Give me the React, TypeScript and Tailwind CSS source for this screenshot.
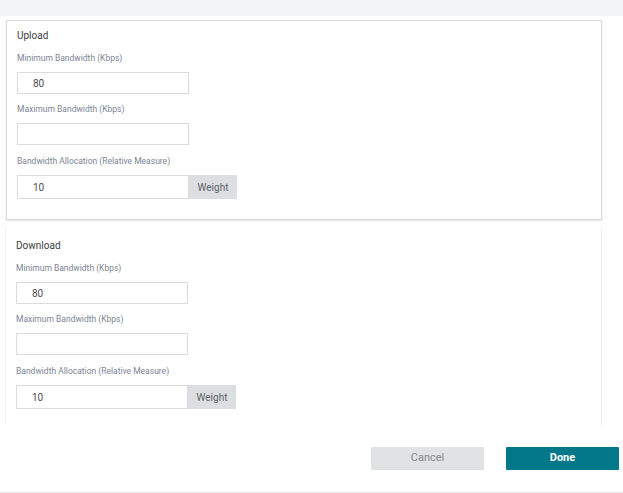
import React from 'react'

type FieldProps = {
  label: string
  value?: string
  weight?: boolean
}

const Field = ({ label, value = '', weight = false }: FieldProps) => {
  return (
    <div>
      <div className="text-[8.5px] leading-[12px] text-[#7b8594]">{label}</div>
      <div className="flex mt-[8px]">
        <input
          readOnly
          value={value}
          className={`w-[172px] ${weight ? 'h-[24px]' : 'h-[22px]'} border border-[#d9dbdf] pl-[15px] text-[10px] text-[#4a4e54] outline-none bg-white`}
        />
        {weight && (
          <div className="w-[48px] h-[24px] bg-[#dcdee1] flex items-center justify-center text-[10px] text-[#5e6268]">
            Weight
          </div>
        )}
      </div>
    </div>
  )
}

const Section = ({ title }: { title: string }) => {
  return (
    <>
      <div className="text-[10px] leading-[12px] text-[#3a3d42]">{title}</div>
      <div className="mt-[10px]">
        <Field label="Minimum Bandwidth (Kbps)" value="80" />
      </div>
      <div className="mt-[9px]">
        <Field label="Maximum Bandwidth (Kbps)" />
      </div>
      <div className="mt-[10px]">
        <Field label="Bandwidth Allocation (Relative Measure)" value="10" weight />
      </div>
    </>
  )
}

const App = () => {
  return (
    <div
      className="w-[623px] h-[493px] bg-white flex flex-col overflow-hidden"
      style={{ fontFamily: 'Roboto, "Liberation Sans", sans-serif' }}
    >
      <div className="h-[425px] overflow-hidden">
        <div className="h-[16px] bg-[#f2f3f5]" />
        <div className="mt-[4px] ml-[6px] w-[596px] h-[200px] border border-[#dadada] shadow-[0_1px_2px_rgba(0,0,0,0.12)] pl-[10px] pt-[9px]">
          <Section title="Upload" />
        </div>
        <div className="mt-[7px] ml-[5px] w-[597px] h-[300px] border-l border-r border-[#eeeeee] pl-[10px] pt-[13px]">
          <Section title="Download" />
        </div>
      </div>
      <div className="flex-1 border-b border-[#e6e6e6] flex justify-end items-start pt-[22px] pr-[4px] gap-[22px]">
        <button className="w-[113px] h-[23px] bg-[#e1e2e4] text-[#85888c] text-[11px] rounded-[1px]">
          Cancel
        </button>
        <button className="w-[113px] h-[23px] bg-[#03788a] text-white text-[11px] font-bold rounded-[1px]">
          Done
        </button>
      </div>
    </div>
  )
}

export default React.memo(App)
